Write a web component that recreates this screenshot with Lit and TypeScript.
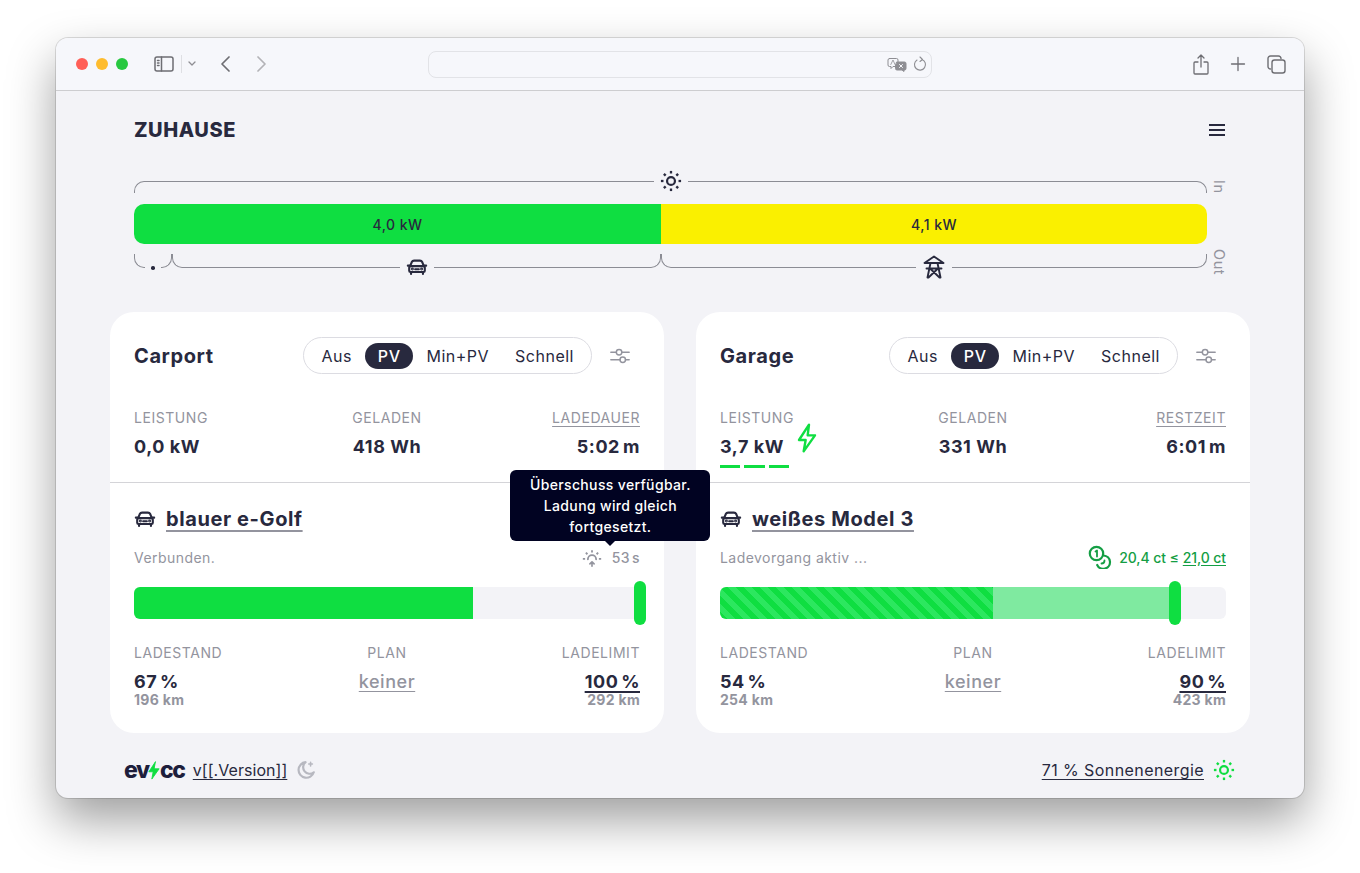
import { LitElement, html, css, svg } from "lit";
import { customElement } from "lit/decorators.js";

const icon = (w: number, h: number, body: unknown, cls = "", vb = "0 0 24 24") => html`<svg class="ic ${cls}" width=${w} height=${h} viewBox=${vb} fill="none" stroke="currentColor" stroke-width="2" stroke-linecap="round" stroke-linejoin="round">${body}</svg>`;

const rays = (cx: number, cy: number, r1: number, r2: number) => [0, 45, 90, 135, 180, 225, 270, 315].map((a) => {
  const s = Math.sin((a * Math.PI) / 180), c = Math.cos((a * Math.PI) / 180);
  return svg`<line x1=${cx + s * r1} y1=${cy - c * r1} x2=${cx + s * r2} y2=${cy - c * r2}></line>`;
});
const sun = (size: number, cls = "") => icon(size, size, svg`<circle cx="12" cy="12" r="4.300" stroke-width="2.400"></circle><g stroke-width="2.500" stroke-linecap="butt">${rays(12, 12, 8.2, 11)}</g>`, cls);
const car = (w = 20, h = 20) => icon(w, h, svg`
  <path d="M4.500 11 6.300 6.600C6.800 5.500 7.600 5 8.800 5h6.400c1.200 0 2 .5 2.500 1.600L19.500 11" stroke-width="2.300"></path>
  <rect x="3.500" y="11" width="17" height="6.500" rx="1.500" stroke-width="2.300"></rect>
  <path d="M2 10.500h2.500M19.500 10.500H22M5.500 18v1.500M18.500 18v1.500M10 14.500h4" stroke-width="2.300"></path>
  <circle cx="7" cy="14.200" r=".6"></circle><circle cx="17" cy="14.200" r=".6"></circle>`);
const tower = () => icon(24, 24, svg`
  <path d="M12 1.500 2.500 8h19zM4.500 13.500h15M8.500 8 5.500 22.500M15.500 8l3 14.500M8 13.500l9.500 9M16 13.500l-9.500 9" stroke-width="1.900"></path>
`, "tower");
const bolt = (w: number, h: number, cls = "") => icon(w, h, svg`<path d="M13.500 2 6 13.500h5L9.500 22 18 10h-5.500z"></path>`, cls);
const sliders = () => icon(22, 22, svg`<path d="M2 8h6M14 8h8M2 16h10M18 16h4"></path><circle cx="11" cy="8" r="3"></circle><circle cx="15" cy="16" r="3"></circle>`, "sliders");

interface Veh { title: string; mode: string; third: string; power: string; charged: string; time: string; active: boolean; name: string; status: string; soc: number; limit: number; socText: string; socKm: string; limText: string; limKm: string; }
const vehicles: Veh[] = [
  { title: "Carport", mode: "PV", third: "LADEDAUER", power: "0,0 kW", charged: "418 Wh", time: "5:02", active: false, name: "blauer e-Golf", status: "Verbunden.", soc: 67, limit: 100, socText: "67 %", socKm: "196 km", limText: "100 %", limKm: "292 km" },
  { title: "Garage", mode: "PV", third: "RESTZEIT", power: "3,7 kW", charged: "331 Wh", time: "6:01", active: true, name: "weißes Model 3", status: "Ladevorgang aktiv ...", soc: 54, limit: 90, socText: "54 %", socKm: "254 km", limText: "90 %", limKm: "423 km" },
];
const modes = ["Aus", "PV", "Min+PV", "Schnell"];

@customElement("app-root")
export class AppRoot extends LitElement {
  static styles = css`
    :host { display: block; min-height: 873px; background: #fff; padding: 38px 56px 0; box-sizing: border-box; font-family: Inter, "Liberation Sans", sans-serif; color: #28293e; letter-spacing: .45px; }
    * { box-sizing: border-box; }
    .ic { display: block; flex: none; }
    .window { width: 1248px; height: 760px; border-radius: 12px; background: #f3f3f7; box-shadow: 0 0 0 1px rgba(0,0,0,.13), 0 22px 48px rgba(0,0,0,.38); display: flex; flex-direction: column; }
    .toolbar { height: 53px; flex: none; display: flex; align-items: center; padding-left: 20px; background: #f6f7fb; border-bottom: 1px solid #cdcdd0; border-radius: 12px 12px 0 0; color: #6e6e73; }
    .light { width: 12px; height: 12px; border-radius: 50%; margin-right: 8px; }
    .red { background: #ff5f57; } .yellow { background: #febc2e; } .green { background: #28c840; }
    .tb-side { margin-left: 18px; }
    .tb-side .ic { stroke-width: 1.500; }
    .tb-sep { width: 1px; height: 18px; background: #dedfe3; margin-left: 7px; }
    .tb-chev { margin-left: 6px; color: #8e8e93; }
    .tb-chev .ic { stroke-width: 1.300; }
    .tb-back { margin-left: 24px; }
    .tb-back .ic, .tb-fwd .ic { stroke-width: 1.700; }
    .tb-fwd { margin-left: 27px; color: #b3b3b7; }
    .address { width: 504px; height: 27px; margin-left: 161px; border: 1px solid #e2e3e7; border-radius: 8px; display: flex; align-items: center; justify-content: flex-end; gap: 6px; padding-right: 4px; color: #8e8e93; }
    .tb-share { margin-left: 261px; }
    .tb-plus { margin-left: 21px; }
    .tb-tabs { margin-left: 21px; }
    .main { padding: 0 54px; flex: none; display: flex; flex-direction: column; }
    .header { height: 78px; flex: none; padding: 0 24px; display: flex; align-items: center; justify-content: space-between; }
    .site { margin: 0; font-size: 20px; font-weight: 800; letter-spacing: .55px; }
    .energy { padding: 0 24px; display: grid; grid-template-columns: 1fr 19px; }
    .bracket-row { display: flex; }
    .top { height: 24px; }
    .bottom { height: 26px; margin-top: 10px; }
    .seg { display: flex; min-width: 0; }
    .line { flex: 1; border: 0 solid #8b8c94; }
    .top .line { margin-top: 12px; border-top-width: 1px; }
    .top .l { border-left-width: 1px; border-top-left-radius: 10px; }
    .top .r { border-right-width: 1px; border-top-right-radius: 10px; }
    .bottom .line { height: 14px; border-bottom-width: 1px; }
    .bottom .l { border-left-width: 1px; border-bottom-left-radius: 10px; }
    .bottom .r { border-right-width: 1px; border-bottom-right-radius: 10px; }
    .slot { flex: none; display: flex; justify-content: center; padding: 0 6px; }
    .top .slot { align-items: flex-start; padding-top: 1px; }
    .bottom .slot { height: 28px; padding-top: 2px; }
    .bottom .slot .tower { margin-top: -1px; }
    .dot { width: 3.500px; height: 3.500px; margin-top: 10px; border-radius: 50%; background: #28293e; }
    .side { font-size: 14.500px; color: #93949e; writing-mode: vertical-rl; padding-left: 6px; line-height: 14px; letter-spacing: .6px; }
    .side.in { padding-top: 11px; height: 24px; }
    .side.out { margin-top: 5px; height: 31px; }
    .bar { display: flex; height: 40px; margin-top: 11px; border-radius: 10px; overflow: hidden; font-size: 14px; font-weight: 500; }
    .bar div { display: flex; align-items: center; justify-content: center; }
    .b-green { background: #0fde41; } .b-yellow { background: #faf000; }
    .cards { display: grid; grid-template-columns: 1fr 1fr; gap: 32px; margin-top: 32px; }
    .card { background: #fff; border-radius: 24px; }
    .top-part { padding: 25px 24px 14px; }
    .head { display: flex; align-items: center; justify-content: space-between; }
    .head h3 { margin: 0; font-size: 20px; font-weight: 700; letter-spacing: .6px; }
    .right { display: flex; align-items: center; }
    .modes { display: flex; height: 37px; align-items: center; border: 1px solid #dcdce2; border-radius: 19px; padding: 0 4px; font-size: 16px; }
    .mode { height: 26px; line-height: 26px; padding: 0 13px; border-radius: 13px; letter-spacing: .5px; }
    .mode.on { background: #28293e; color: #fff; font-weight: 500; }
    .setting { width: 40px; margin-left: 8px; display: flex; justify-content: center; color: #93949e; }
    .sliders { stroke-width: 1.600; }
    .grid3 { display: grid; grid-template-columns: 1fr 1fr 1fr; }
    .grid3 > div:nth-child(2) { text-align: center; }
    .grid3 > div:nth-child(3) { text-align: right; }
    .stats { margin-top: 35px; }
    .lbl { font-size: 14px; line-height: 18px; color: #93949e; letter-spacing: .55px; }
    .lbl.u { text-decoration: underline; text-underline-offset: 3px; text-decoration-thickness: 1px; }
    .val { font-size: 18px; line-height: 26px; font-weight: 700; margin-top: 7px; letter-spacing: .55px; }
    .val .m { margin-left: 3px; }
    .pw { display: flex; align-items: flex-start; }
    .pw .charge { color: #0fde41; margin: -12px 0 0 7px; stroke-width: 1.800; }
    .dashes { display: flex; gap: 4px; height: 3px; margin-top: 5px; width: 69px; }
    .dashes i { flex: 1; background: #0fde41; }
    .veh { border-top: 1px solid #d4d4d8; padding: 22px 24px 25px; }
    .veh-title { display: flex; align-items: center; gap: 10px; height: 28px; font-size: 20px; font-weight: 700; letter-spacing: .6px; }
    .veh-title a { text-decoration: underline; text-decoration-color: #93949e; text-decoration-thickness: 2px; text-underline-offset: 4px; }
    .statusrow { display: flex; justify-content: space-between; align-items: center; margin-top: 14px; height: 20px; font-size: 14px; color: #93949e; }
    .timer { position: relative; display: flex; align-items: center; gap: 9px; font-weight: 500; letter-spacing: .4px; }
    .timer .s { margin-left: 2px; }
    .tip { position: absolute; left: 50%; bottom: calc(100% + 5px); transform: translateX(-50%); width: 200px; padding: 4px; border-radius: 6px; background: #010322; color: #fff; font-size: 14px; line-height: 21px; font-weight: 500; text-align: center; z-index: 10; letter-spacing: .35px; }
    .tip::after { content: ""; position: absolute; left: 50%; top: 100%; margin-left: -5px; border: 5px solid transparent; border-bottom: 0; border-top-color: #010322; }
    .price { display: flex; align-items: center; color: #149e44; font-weight: 500; gap: 7px; letter-spacing: -.1px; }
    .price u { text-underline-offset: 2px; margin-left: 4px; }
    .track { position: relative; height: 32px; margin-top: 20px; border-radius: 6px; background: #f3f3f7; }
    .track .fill, .track .rest { position: absolute; top: 0; bottom: 0; }
    .fill { left: 0; background: #0fde41; border-radius: 6px 0 0 6px; }
    .fill.striped { background: repeating-linear-gradient(45deg, #0fde41 0 5.650px, #2ce75f 5.650px 11.300px); }
    .rest { background: #7feaa0; }
    .thumb { position: absolute; top: -6px; width: 12px; height: 44px; margin-left: -6px; border-radius: 6px; background: #0fde41; }
    .limits { margin-top: 25px; }
    .limits .val { margin-top: 7px; word-spacing: -2px; }
    .plan { font-weight: 500; color: #93949e; text-decoration: underline; text-underline-offset: 3px; text-decoration-thickness: 1px; }
    .lim { text-decoration: underline; text-underline-offset: 3px; text-decoration-thickness: 2px; }
    .sub { font-size: 14px; line-height: 16px; font-weight: 700; color: #93949e; margin-top: -3px; letter-spacing: .3px; }
    .footer { margin-top: 12px; height: 50px; padding: 0 69px 0 68px; display: flex; align-items: center; justify-content: space-between; font-size: 16px; }
    .fl, .fr { display: flex; align-items: center; }
    .logo { display: flex; align-items: center; font-size: 23px; font-weight: 800; letter-spacing: -1.300px; line-height: 1; margin-right: 8px; color: #1d1e3c; }
    .logo .ic { color: #0fde41; margin: 0 0 0 -1px; stroke-width: 1; }
    .logo .ic path { fill: #0fde41; }
    .footer a { text-decoration: underline; text-underline-offset: 3px; text-decoration-thickness: 1px; letter-spacing: .05px; }
    .footer .fr a { letter-spacing: .42px; }
    .moon { color: #b7b8c0; margin-left: 8px; }
    .fr .ic { color: #0fde41; margin-left: 9px; }
  `;

  private seg(w: number, slot: unknown) {
    return html`<div class="seg" style="flex:${w} 1 0"><div class="line l"></div><div class="slot">${slot}</div><div class="line r"></div></div>`;
  }

  private card(v: Veh) {
    return html`<section class="card">
      <div class="top-part">
        <div class="head">
          <h3>${v.title}</h3>
          <div class="right">
            <div class="modes">${modes.map((m) => html`<span class="mode ${m === v.mode ? "on" : ""}">${m}</span>`)}</div>
            <div class="setting">${sliders()}</div>
          </div>
        </div>
        <div class="grid3 stats">
          <div>
            <div class="lbl">LEISTUNG</div>
            <div class="val pw"><span>${v.power}</span>${v.active ? bolt(32, 32, "charge") : ""}</div>
            <div class="dashes">${v.active ? html`<i></i><i></i><i></i>` : ""}</div>
          </div>
          <div><div class="lbl">GELADEN</div><div class="val">${v.charged}</div></div>
          <div><div class="lbl u">${v.third}</div><div class="val">${v.time}<span class="m">m</span></div></div>
        </div>
      </div>
      <div class="veh">
        <div class="veh-title">${car(22, 22)}<a>${v.name}</a></div>
        <div class="statusrow">
          <span>${v.status}</span>
          ${v.active
            ? html`<span class="price">${icon(24, 24, svg`<circle cx="8.500" cy="8.500" r="6.700" stroke-width="2.200"></circle><path d="M7.500 6.500 9 5.500v6" stroke-width="1.800"></path><path d="M15.700 10.500a6.700 6.700 0 1 1-6.500 9.500" stroke-width="2.200"></path><path d="M13.500 18.500c1.500 0 3-.8 3-3" stroke-width="1.800"></path>`)}<span>20,4 ct ≤<u>21,0 ct</u></span></span>`
            : html`<span class="timer">${icon(22, 22, svg`<path d="M7.500 14.500a4.500 4.500 0 0 1 9 0" stroke-width="2"></path><g stroke-width="2" stroke-linecap="butt"><path d="M12 7V4.500M7 9 5.300 7.300M17 9l1.700-1.700M4.500 14H2M22 14h-2.500"></path></g><path d="M12 22v-4.500M9.700 19.500 12 17.200l2.300 2.300" stroke-width="1.800"></path>`)}<span>53<span class="s">s</span></span><div class="tip">Überschuss verfügbar.<br />Ladung wird gleich<br />fortgesetzt.</div></span>`}
        </div>
        <div class="track">
          ${v.active ? html`<div class="rest" style="left:${v.soc}%;width:${v.limit - v.soc}%"></div>` : ""}
          <div class="fill ${v.active ? "striped" : ""}" style="width:${v.soc}%"></div>
          <div class="thumb" style="left:${v.limit}%"></div>
        </div>
        <div class="grid3 limits">
          <div><div class="lbl">LADESTAND</div><div class="val">${v.socText}</div><div class="sub">${v.socKm}</div></div>
          <div><div class="lbl">PLAN</div><div class="val plan">keiner</div></div>
          <div><div class="lbl">LADELIMIT</div><div class="val"><span class="lim">${v.limText}</span></div><div class="sub">${v.limKm}</div></div>
        </div>
      </div>
    </section>`;
  }

  render() {
    return html`<div class="window">
      <div class="toolbar">
        <span class="light red"></span><span class="light yellow"></span><span class="light green"></span>
        <span class="tb-side">${icon(20, 20, svg`<rect x="1" y="3" width="18" height="14" rx="2"></rect><path d="M7.500 3v14M3.500 6.500h1.500M3.500 9h1.500M3.500 11.500h1.500"></path>`, "", "0 0 20 20")}</span>
        <span class="tb-sep"></span>
        <span class="tb-chev">${icon(8, 6, svg`<path d="M1 1l3 3 3-3"></path>`, "", "0 0 8 6")}</span>
        <span class="tb-back">${icon(10, 16, svg`<path d="M9 1 2 8l7 7"></path>`, "", "0 0 10 16")}</span>
        <span class="tb-fwd">${icon(10, 16, svg`<path d="M1 1l7 7-7 7"></path>`, "", "0 0 10 16")}</span>
        <div class="address">
          ${icon(20, 15, svg`<path d="M2.500 1.500h7a1.500 1.500 0 0 1 1.500 1.500v5a1.500 1.500 0 0 1-1.500 1.500H6L4 11.500v-2H2.500A1.500 1.500 0 0 1 1 8V3a1.500 1.500 0 0 1 1.500-1.500z" stroke-width="1"></path><path d="M3.800 7.500 6 3l2 4.500" stroke-width=".8"></path><path d="M10 5h7.500A1.500 1.500 0 0 1 19 6.500v5a1.500 1.500 0 0 1-1.500 1.500H17v1.500L15 13h-5a1.500 1.500 0 0 1-1.500-1.500v-3z" fill="currentColor" stroke-width="1"></path><path d="M12.500 7.500l3 3M15.500 7.500l-3 3" stroke="#f6f7fb" stroke-width="1"></path>`, "", "0 0 20 15")}
          ${icon(14, 16, svg`<path d="M9 3.500A5.500 5.500 0 1 1 4 4M7 1l2.500 2.500L7 5.500" stroke-width="1.100"></path>`, "", "0 0 14 16")}
        </div>
        <span class="tb-share">${icon(16, 21, svg`<path d="M5 8H2a1 1 0 0 0-1 1v10a1 1 0 0 0 1 1h12a1 1 0 0 0 1-1V9a1 1 0 0 0-1-1h-3M8 13V1.500M5 4l3-3 3 3" stroke-width="1.300"></path>`, "", "0 0 16 21")}</span>
        <span class="tb-plus">${icon(16, 16, svg`<path d="M8 1.500v13M1.500 8h13" stroke-width="1.300"></path>`, "", "0 0 16 16")}</span>
        <span class="tb-tabs">${icon(19, 19, svg`<rect x="5" y="5" width="13" height="13" rx="2.500" stroke-width="1.400"></rect><path d="M3.500 14A2.500 2.500 0 0 1 1 11.500v-8A2.500 2.500 0 0 1 3.500 1h8A2.500 2.500 0 0 1 14 3.500" stroke-width="1.400"></path>`, "", "0 0 19 19")}</span>
      </div>
      <div class="main">
        <header class="header">
          <h1 class="site">ZUHAUSE</h1>
          ${icon(18, 18, svg`<path d="M1 4h16M1 9h16M1 14h16" stroke-width="2" stroke-linecap="butt"></path>`, "", "0 0 18 18")}
        </header>
        <div class="energy">
          <div class="bracket-row top">${this.seg(1, sun(22))}</div>
          <div class="side in">In</div>
          <div class="bar"><div class="b-green" style="width:527px">4,0 kW</div><div class="b-yellow" style="flex:1">4,1 kW</div></div>
          <div></div>
          <div class="bracket-row bottom">
            ${this.seg(38, html`<span class="dot"></span>`)}
            ${this.seg(489, car(22, 22))}
            ${this.seg(546, tower())}
          </div>
          <div class="side out">Out</div>
        </div>
        <div class="cards">${vehicles.map((v) => this.card(v))}</div>
      </div>
      <footer class="footer">
        <div class="fl">
          <span class="logo">ev${icon(12, 19, svg`<path d="M13.500 2 6 13.500h5L9.500 22 18 10h-5.500z"></path>`, "", "5 1 14 22")}cc</span>
          <a>v[[.Version]]</a>
          <span class="moon">${icon(22, 22, svg`<path d="M11.500 3.500a8.500 8.500 0 1 0 9 11A7 7 0 0 1 11.500 3.500z" stroke-width="2.400"></path><path d="M17 3.500v4M15 5.500h4" stroke-width="1.700"></path>`)}</span>
        </div>
        <div class="fr"><a>71 % Sonnenenergie</a>${sun(22)}</div>
      </footer>
    </div>`;
  }
}
